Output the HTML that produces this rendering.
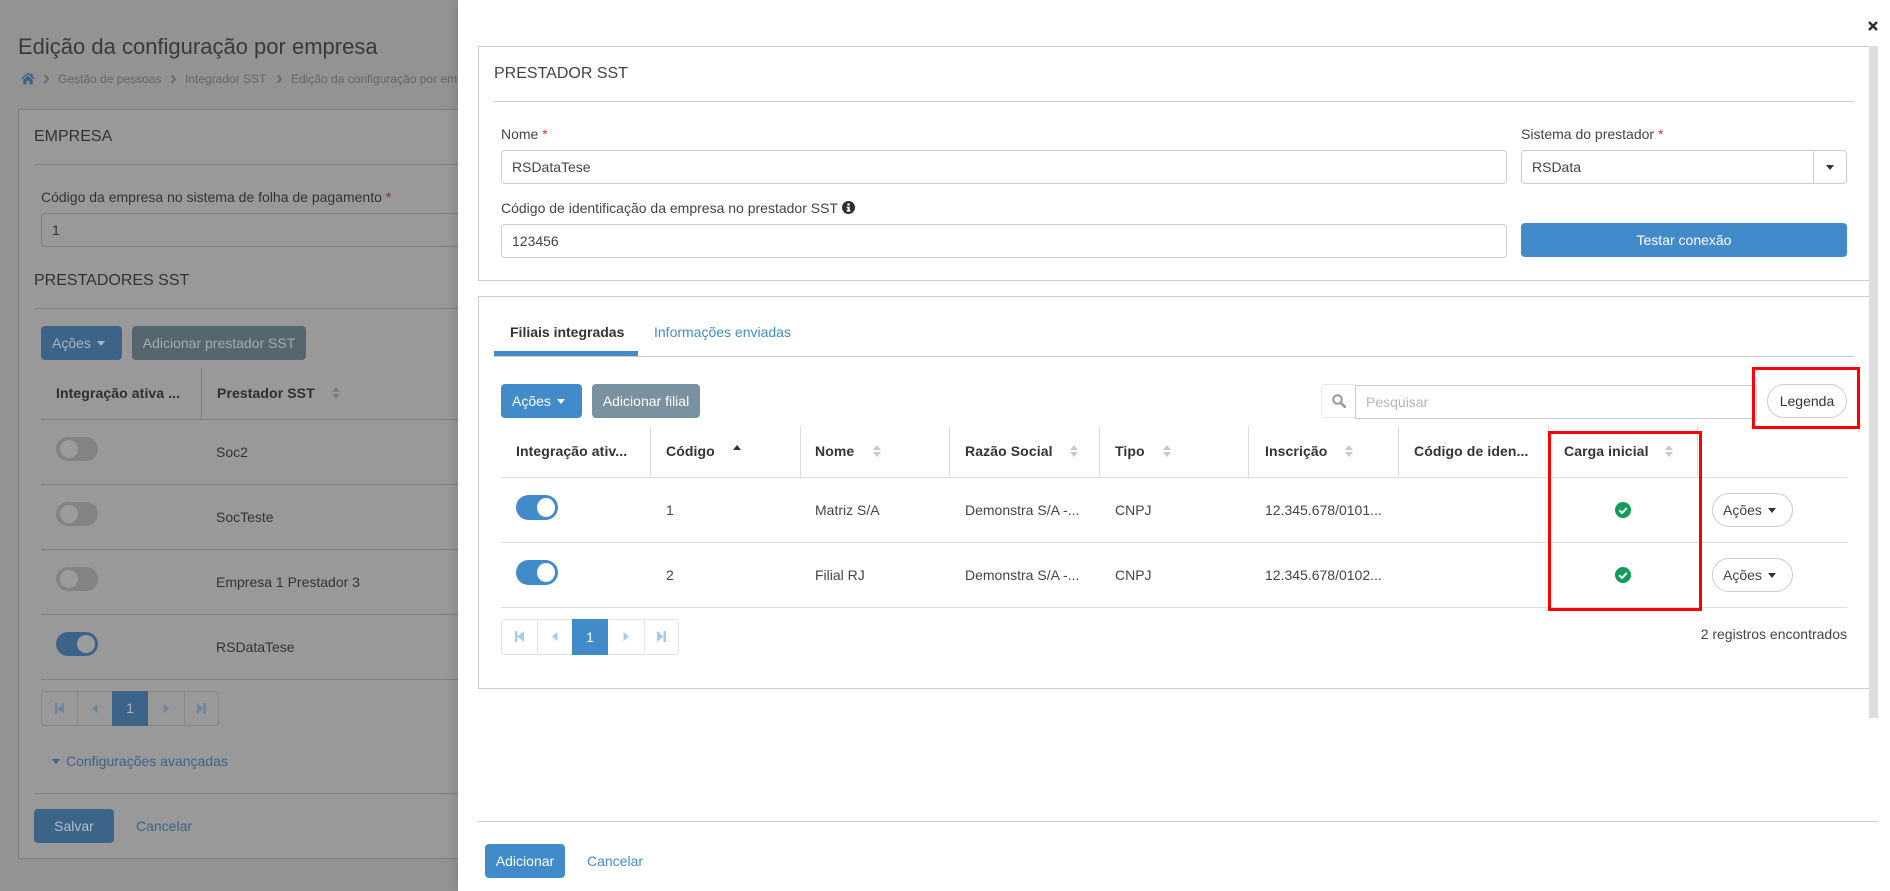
<!DOCTYPE html>
<html lang="pt"><head><meta charset="utf-8"><title>Edição da configuração por empresa</title>
<style>
*{box-sizing:border-box}
html,body{margin:0;padding:0;width:1890px;height:891px;overflow:hidden;background:#939393;font-family:"Liberation Sans",Arial,sans-serif;font-size:14px;color:#333}
.a{position:absolute}
.t{position:absolute;line-height:20px;height:20px;white-space:nowrap}
.l{position:absolute;height:1px}
.b{position:absolute;border-radius:4px;height:34px;line-height:34px;text-align:center;white-space:nowrap}
.bl{text-align:left;padding-left:11px}
.tg{position:absolute;width:42px;height:24px;border-radius:12px}
.tg i{position:absolute;top:3px;width:18px;height:18px;border-radius:50%;background:#fff}
.car{display:inline-block;width:0;height:0;border-left:4.5px solid transparent;border-right:4.5px solid transparent;border-top:5px solid currentColor;vertical-align:2px;margin-left:6px}
.th{font-weight:bold;letter-spacing:.1px}
svg{position:absolute;display:block}
#left{position:absolute;left:0;top:0;width:458px;height:891px;overflow:hidden;color:#333}
#left .l{background:#808080}
#left .t{color:#333}
#dr{position:absolute;left:458px;top:0;width:1432px;height:891px;background:#fff;box-shadow:-3px 0 12px rgba(0,0,0,.12)}
.inp{position:absolute;border:1px solid #ccc;border-radius:4px;background:#fff;height:34px;line-height:32px;padding-left:10px;color:#444}
.red{position:absolute;border:3px solid #f00;z-index:5}
.g{background:#ddd}
</style></head><body>

<div id="left">
 <div class="a" style="left:18px;top:109px;width:460px;height:750px;background:#999;border:1px solid #7d7d7d"></div>
 <div class="t" style="left:18px;top:33px;font-size:22px;line-height:28px;height:28px;color:#3a3a3a">Edição da configuração por empresa</div>
 <svg style="left:21px;top:72px" width="14" height="13" viewBox="0 0 14 13"><path d="M7 .5 0 6.400l.9 1L7 2.300l6.100 5.100.9-1L11.600 4.400V1.500H9.800v1.400zM2.200 7.700V12.500h3.300V9h3v3.500h3.300V7.700L7 3.700z" fill="#3c6488"/></svg>
 <svg style="left:43px;top:74px" width="7" height="10" viewBox="0 0 7 10"><path d="M1.500 1 5 5 1.500 9" fill="none" stroke="#6e6e6e" stroke-width="2"/></svg>
 <div class="t" style="left:58px;top:69px;font-size:12px;color:#666">Gestão de pessoas</div>
 <svg style="left:170px;top:74px" width="7" height="10" viewBox="0 0 7 10"><path d="M1.500 1 5 5 1.500 9" fill="none" stroke="#6e6e6e" stroke-width="2"/></svg>
 <div class="t" style="left:185px;top:69px;font-size:12px;color:#666">Integrador SST</div>
 <svg style="left:276px;top:74px" width="7" height="10" viewBox="0 0 7 10"><path d="M1.500 1 5 5 1.500 9" fill="none" stroke="#6e6e6e" stroke-width="2"/></svg>
 <div class="t" style="left:291px;top:69px;font-size:12px;color:#666">Edição da configuração por empresa</div>

 <div class="t" style="left:34px;top:127px;font-size:16px">EMPRESA</div>
 <div class="l" style="left:34px;top:164px;width:424px"></div>
 <div class="t" style="left:41px;top:187px">Código da empresa no sistema de folha de pagamento <span style="color:#7a3a30">*</span></div>
 <div class="a" style="left:41px;top:213px;width:430px;height:34px;border:1px solid #808080;border-radius:4px;line-height:32px;padding-left:10px;color:#333">1</div>
 <div class="t" style="left:34px;top:271px;font-size:16px">PRESTADORES SST</div>
 <div class="l" style="left:34px;top:308px;width:424px"></div>
 <div class="b bl" style="left:41px;top:326px;width:81px;background:#3c6488;color:#a6b5c4">Ações<span class="car"></span></div>
 <div class="b" style="left:132px;top:326px;width:174px;background:#56666f;color:#a3abb0">Adicionar prestador SST</div>
 <div class="a" style="left:201px;top:368px;width:1px;height:51px;background:#808080"></div>
 <div class="t th" style="left:56px;top:383px;color:#2f2f2f">Integração ativa ...</div>
 <div class="t th" style="left:217px;top:383px;color:#2f2f2f">Prestador SST</div>
 <svg style="left:332px;top:387px" width="8" height="12" viewBox="0 0 8 12"><path d="M4 0 8 5H0zM4 12 0 7h8z" fill="#7d7d7d"/></svg>
 <div class="l" style="left:41px;top:419px;width:417px"></div>
 <div class="l" style="left:41px;top:484px;width:417px"></div>
 <div class="l" style="left:41px;top:549px;width:417px"></div>
 <div class="l" style="left:41px;top:614px;width:417px"></div>
 <div class="l" style="left:41px;top:679px;width:417px"></div>
 <div class="tg" style="left:56px;top:437px;background:#838383"><i style="left:4px;background:#9c9c9c"></i></div>
 <div class="tg" style="left:56px;top:502px;background:#838383"><i style="left:4px;background:#9c9c9c"></i></div>
 <div class="tg" style="left:56px;top:567px;background:#838383"><i style="left:4px;background:#9c9c9c"></i></div>
 <div class="tg" style="left:56px;top:632px;background:#3c6488"><i style="left:21px;background:#9c9c9c"></i></div>
 <div class="t" style="left:216px;top:442px">Soc2</div>
 <div class="t" style="left:216px;top:507px">SocTeste</div>
 <div class="t" style="left:216px;top:572px">Empresa 1 Prestador 3</div>
 <div class="t" style="left:216px;top:637px">RSDataTese</div>

 <div class="a" style="left:41px;top:691px;width:178px;height:35px;border:1px solid #868686;border-radius:4px"></div>
 <div class="a" style="left:77px;top:691px;width:1px;height:35px;background:#868686"></div>
 <div class="a" style="left:184px;top:691px;width:1px;height:35px;background:#868686"></div>
 <div class="a" style="left:112px;top:691px;width:36px;height:35px;background:#3c6488;color:#a6b5c4;text-align:center;line-height:35px">1</div>
 <svg style="left:55px;top:703px" width="9" height="11" viewBox="0 0 9 11"><path d="M0 0h2.500v11H0zM9 0v11L2.500 5.500z" fill="#6c86a0"/></svg>
 <svg style="left:92px;top:704px" width="6" height="9" viewBox="0 0 6 9"><path d="M5.500 0v9L0 4.500z" fill="#6c86a0"/></svg>
 <svg style="left:163px;top:704px" width="6" height="9" viewBox="0 0 6 9"><path d="M.5 0v9L6 4.500z" fill="#6c86a0"/></svg>
 <svg style="left:197px;top:703px" width="9" height="11" viewBox="0 0 9 11"><path d="M9 0H6.500v11H9zM0 0v11l6.500-5.500z" fill="#6c86a0"/></svg>

 <div class="a" style="left:52px;top:759px;border-left:4.500px solid transparent;border-right:4.500px solid transparent;border-top:5px solid #3c6488"></div>
 <div class="t" style="left:66px;top:751px;color:#3c6488">Configurações avançadas</div>
 <div class="l" style="left:34px;top:793px;width:424px"></div>
 <div class="b" style="left:34px;top:809px;width:80px;background:#3c6488;color:#b0bdca">Salvar</div>
 <div class="t" style="left:136px;top:816px;color:#3c6488">Cancelar</div>
</div>

<div id="dr"></div>
<div class="a" style="left:1869px;top:46px;width:9px;height:672px;background:#ddd"></div>
<svg style="left:1868px;top:21px" width="10" height="10" viewBox="0 0 10 10"><path d="M1 1 9 9M9 1 1 9" stroke="#333" stroke-width="2.600"/></svg>

<!-- Card 1 -->
<div class="a" style="left:478px;top:46px;width:1391px;height:235px;border:1px solid #ccc;border-right:0"></div>
<div class="t" style="left:494px;top:64px;font-size:16px;color:#444">PRESTADOR SST</div>
<div class="l g" style="left:494px;top:101px;width:1360px;background:#ccc"></div>
<div class="t" style="left:501px;top:124px;color:#444">Nome <span style="color:#d9352a">*</span></div>
<div class="inp" style="left:501px;top:150px;width:1006px">RSDataTese</div>
<div class="t" style="left:501px;top:198px;color:#444">Código de identificação da empresa no prestador SST</div>
<svg style="left:842px;top:201px" width="13" height="13" viewBox="0 0 13 13"><circle cx="6.500" cy="6.500" r="6.500" fill="#2f2f2f"/><rect x="5.400" y="2.400" width="2.300" height="2.100" fill="#fff"/><path d="M4.700 5.600h3v3.700h.8v1.300H4.700V9.300h.8V6.900h-.8z" fill="#fff"/></svg>
<div class="inp" style="left:501px;top:224px;width:1006px">123456</div>
<div class="t" style="left:1521px;top:124px;color:#444">Sistema do prestador <span style="color:#d9352a">*</span></div>
<div class="inp" style="left:1521px;top:150px;width:326px">RSData</div>
<div class="a" style="left:1813px;top:150px;width:1px;height:34px;background:#ccc"></div>
<div class="a" style="left:1826px;top:165px;border-left:4.500px solid transparent;border-right:4.500px solid transparent;border-top:5px solid #333"></div>
<div class="b" style="left:1521px;top:223px;width:326px;background:#428bca;color:#fff">Testar conexão</div>

<!-- Card 2 -->
<div class="a" style="left:478px;top:296px;width:1391px;height:393px;border:1px solid #ccc;border-right:0"></div>
<div class="t" style="left:510px;top:322px;font-weight:bold;color:#333">Filiais integradas</div>
<div class="t" style="left:654px;top:322px;color:#428bca">Informações enviadas</div>
<div class="a" style="left:494px;top:351px;width:144px;height:5px;background:#428bca"></div>
<div class="l" style="left:494px;top:356px;width:1360px;background:#ccc"></div>

<div class="b bl" style="left:501px;top:384px;width:81px;background:#428bca;color:#fff">Ações<span class="car"></span></div>
<div class="b" style="left:592px;top:384px;width:108px;background:#7a919f;color:#fff">Adicionar filial</div>
<div class="a" style="left:1321px;top:384px;width:35px;height:34px;border:1px solid #e8e8e8;border-radius:4px 0 0 4px"></div>
<svg style="left:1332px;top:394px" width="14" height="14" viewBox="0 0 14 14"><circle cx="5.500" cy="5.500" r="4.300" fill="none" stroke="#999" stroke-width="2"/><path d="M8.800 8.800 12.800 12.800" stroke="#999" stroke-width="2.600" stroke-linecap="round"/></svg>
<div class="a" style="left:1355px;top:385px;width:402px;height:34px;border:1px solid #ccc;border-radius:0 4px 4px 0;line-height:32px;padding-left:10px;color:#b5b5b5">Pesquisar</div>
<div class="b" style="left:1767px;top:384px;width:80px;border:1px solid #ccc;border-radius:17px;line-height:32px;background:#fff;color:#333">Legenda</div>

<!-- table head -->
<div class="a g" style="left:650px;top:426px;width:1px;height:51px"></div>
<div class="a g" style="left:800px;top:426px;width:1px;height:51px"></div>
<div class="a g" style="left:949px;top:426px;width:1px;height:51px"></div>
<div class="a g" style="left:1099px;top:426px;width:1px;height:51px"></div>
<div class="a g" style="left:1248px;top:426px;width:1px;height:51px"></div>
<div class="a g" style="left:1398px;top:426px;width:1px;height:51px"></div>
<div class="a g" style="left:1548px;top:426px;width:1px;height:51px"></div>
<div class="a g" style="left:1697px;top:426px;width:1px;height:51px"></div>
<div class="t th" style="left:516px;top:441px">Integração ativ...</div>
<div class="t th" style="left:666px;top:441px">Código</div>
<svg style="left:733px;top:445px" width="8" height="5" viewBox="0 0 8 5"><path d="M4 0 8 5H0z" fill="#333"/></svg>
<div class="t th" style="left:815px;top:441px">Nome</div>
<div class="t th" style="left:965px;top:441px">Razão Social</div>
<div class="t th" style="left:1115px;top:441px">Tipo</div>
<div class="t th" style="left:1265px;top:441px">Inscrição</div>
<div class="t th" style="left:1414px;top:441px">Código de iden...</div>
<div class="t th" style="left:1564px;top:441px">Carga inicial</div>
<svg style="left:873px;top:445px" width="8" height="12" viewBox="0 0 8 12"><path d="M4 0 8 5H0zM4 12 0 7h8z" fill="#c8c8c8"/></svg>
<svg style="left:1070px;top:445px" width="8" height="12" viewBox="0 0 8 12"><path d="M4 0 8 5H0zM4 12 0 7h8z" fill="#c8c8c8"/></svg>
<svg style="left:1163px;top:445px" width="8" height="12" viewBox="0 0 8 12"><path d="M4 0 8 5H0zM4 12 0 7h8z" fill="#c8c8c8"/></svg>
<svg style="left:1345px;top:445px" width="8" height="12" viewBox="0 0 8 12"><path d="M4 0 8 5H0zM4 12 0 7h8z" fill="#c8c8c8"/></svg>
<svg style="left:1665px;top:445px" width="8" height="12" viewBox="0 0 8 12"><path d="M4 0 8 5H0zM4 12 0 7h8z" fill="#c8c8c8"/></svg>
<div class="l" style="left:501px;top:477px;width:1346px;background:#ddd"></div>
<div class="l" style="left:501px;top:542px;width:1346px;background:#ddd"></div>
<div class="l" style="left:501px;top:607px;width:1346px;background:#ddd"></div>

<!-- rows -->
<div class="tg" style="left:516px;top:495px;background:#428bca;height:25px;border-radius:13px"><i style="left:21px;top:3px;height:19px;width:18px"></i></div>
<div class="tg" style="left:516px;top:560px;background:#428bca;height:25px;border-radius:13px"><i style="left:21px;top:3px;height:19px;width:18px"></i></div>
<div class="t" style="left:666px;top:500px;color:#444">1</div>
<div class="t" style="left:815px;top:500px;color:#444">Matriz S/A</div>
<div class="t" style="left:965px;top:500px;color:#444">Demonstra S/A -...</div>
<div class="t" style="left:1115px;top:500px;color:#444">CNPJ</div>
<div class="t" style="left:1265px;top:500px;color:#444">12.345.678/0101...</div>
<div class="t" style="left:666px;top:565px;color:#444">2</div>
<div class="t" style="left:815px;top:565px;color:#444">Filial RJ</div>
<div class="t" style="left:965px;top:565px;color:#444">Demonstra S/A -...</div>
<div class="t" style="left:1115px;top:565px;color:#444">CNPJ</div>
<div class="t" style="left:1265px;top:565px;color:#444">12.345.678/0102...</div>
<svg style="left:1615px;top:502px" width="16" height="16" viewBox="0 0 16 16"><circle cx="8" cy="8" r="8" fill="#0f9d58"/><path d="M4.300 8.200 7 10.900 11.800 6" fill="none" stroke="#fff" stroke-width="2"/></svg>
<svg style="left:1615px;top:567px" width="16" height="16" viewBox="0 0 16 16"><circle cx="8" cy="8" r="8" fill="#0f9d58"/><path d="M4.300 8.200 7 10.900 11.800 6" fill="none" stroke="#fff" stroke-width="2"/></svg>
<div class="b bl" style="left:1712px;top:493px;width:81px;border:1px solid #ccc;border-radius:17px;line-height:32px;color:#444;padding-left:10px">Ações<span class="car" style="color:#333"></span></div>
<div class="b bl" style="left:1712px;top:558px;width:81px;border:1px solid #ccc;border-radius:17px;line-height:32px;color:#444;padding-left:10px">Ações<span class="car" style="color:#333"></span></div>

<!-- pagination -->
<div class="a" style="left:501px;top:619px;width:178px;height:36px;border:1px solid #e3e3e3;border-radius:4px"></div>
<div class="a" style="left:537px;top:619px;width:1px;height:36px;background:#e3e3e3"></div>
<div class="a" style="left:644px;top:619px;width:1px;height:36px;background:#e3e3e3"></div>
<div class="a" style="left:572px;top:619px;width:36px;height:36px;background:#428bca;color:#fff;text-align:center;line-height:36px">1</div>
<svg style="left:515px;top:631px" width="9" height="11" viewBox="0 0 9 11"><path d="M0 0h2.500v11H0zM9 0v11L2.500 5.500z" fill="#a9cbe8"/></svg>
<svg style="left:552px;top:632px" width="6" height="9" viewBox="0 0 6 9"><path d="M5.500 0v9L0 4.500z" fill="#a9cbe8"/></svg>
<svg style="left:623px;top:632px" width="6" height="9" viewBox="0 0 6 9"><path d="M.5 0v9L6 4.500z" fill="#a9cbe8"/></svg>
<svg style="left:657px;top:631px" width="9" height="11" viewBox="0 0 9 11"><path d="M9 0H6.500v11H9zM0 0v11l6.500-5.500z" fill="#a9cbe8"/></svg>
<div class="t" style="right:43px;top:624px;color:#444">2 registros encontrados</div>

<div class="red" style="left:1752px;top:367px;width:108px;height:62px"></div>
<div class="red" style="left:1548px;top:431px;width:154px;height:180px"></div>

<!-- footer -->
<div class="l" style="left:478px;top:821px;width:1400px;background:#ccc"></div>
<div class="b" style="left:485px;top:844px;width:80px;background:#428bca;color:#fff">Adicionar</div>
<div class="t" style="left:587px;top:851px;color:#428bca">Cancelar</div>
</body></html>
